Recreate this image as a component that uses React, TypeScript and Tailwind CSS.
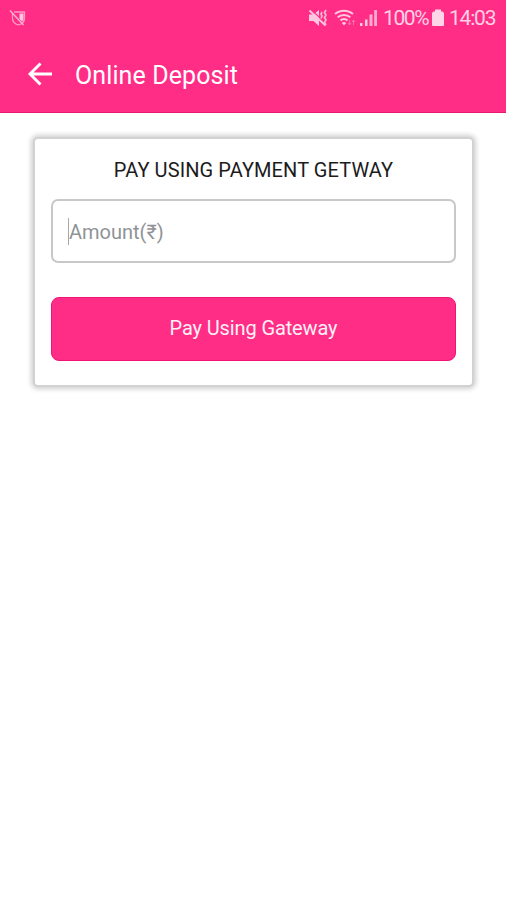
import React from 'react';

function ShieldOff() {
  return (
    <svg width="18" height="18" viewBox="0 0 18 18" fill="none">
      <path
        d="M5 3h10.500v6c0 3.500-2.500 6-6 7-3.500-1-6-3.500-6-7V4"
        stroke="#ff9cc6"
        strokeWidth="1.300"
      />
      <path d="M10.500 4.500h4V9c0 1.500-.500 2.500-1.500 3.500l-2.500-2.500z" fill="#ffc8e0" />
      <path d="M1 1.500l13.500 14.500" stroke="#ffb0d2" strokeWidth="1.400" />
    </svg>
  );
}

function Muted() {
  return (
    <svg width="20" height="18" viewBox="0 0 20 18" fill="none">
      <path d="M1 5.500h4.500l5.500-4.500v16l-5.500-5H1z" fill="#ffc8e0" />
      <path d="M3.500 1l15 14" stroke="#ff2d86" strokeWidth="1.200" />
      <path d="M1.500 1.500l16 15" stroke="#ffc8e0" strokeWidth="1.800" />
      <path
        d="M14 3l-1 2 1 2-1 2.500M18 1l-1.500 2.500L18 6l-1.500 2.500L18 11l-1.500 2.500L18 16"
        stroke="#ffb4d4"
        strokeWidth="1.700"
      />
    </svg>
  );
}

function Wifi() {
  return (
    <svg width="23" height="18" viewBox="0 0 23 18" fill="none">
      <path
        d="M1 5c5-4.500 13-4.500 18 0M3.700 8.300c3.500-3.200 9.100-3.200 12.600 0M6.500 11.500c2-1.900 5-1.900 7 0"
        stroke="#ffc8e0"
        strokeWidth="2"
      />
      <path d="M7.800 14c1.300-1.200 3.100-1.200 4.400 0L10 16.500z" fill="#ffc8e0" />
      <path d="M15.500 11v5M14 14l1.500 2 1.500-2M19.500 16v-5M18 13l1.500-2 1.500 2" stroke="#ff6fac" />
    </svg>
  );
}

function Signal() {
  return (
    <svg width="18" height="18" viewBox="0 0 18 18">
      <path d="M0 14h2.500v3H0zM5 10.500h2.500V17H5z" fill="#ffc8e0" />
      <path d="M9.500 5.500h3V17h-3zM14.200 1H17v16h-2.800z" fill="#ffabcf" />
    </svg>
  );
}

function Battery() {
  return (
    <svg width="12" height="18" viewBox="0 0 12 18">
      <path d="M3 .500h6v2h1.500l1.500 1.500v12.500l-1 .500H1l-1-.500V4l1.500-1.500H3z" fill="#ffd6e7" />
    </svg>
  );
}

export default function App() {
  return (
    <div className="h-[900px] w-[506px] bg-white font-[Roboto,'Noto_Sans',sans-serif]">
      <header className="h-[113px] border-b border-[#e91873] bg-[#ff2d86]">
        <div className="flex h-9 items-center justify-between pl-[9px] pr-[11px] text-[#ffd0e4]">
          <ShieldOff />
          <div className="flex items-center">
            <Muted />
            <div className="ml-[6px]">
              <Wifi />
            </div>
            <div className="ml-[3px]">
              <Signal />
            </div>
            <span className="ml-[5px] w-[45px] whitespace-nowrap text-[21px] leading-9 tracking-[-1.4px]">
              100%
            </span>
            <div className="ml-[4px]">
              <Battery />
            </div>
            <span className="ml-[5px] w-[46px] whitespace-nowrap text-[21px] leading-9 tracking-[-1.2px]">
              14:03
            </span>
          </div>
        </div>
        <div className="flex h-[76px] items-center pl-[28px] text-white">
          <svg width="24" height="24" viewBox="0 0 24 24" fill="none">
            <path d="M12.500 1.500L2 12l10.500 10.500M2 12h22" stroke="white" strokeWidth="2.900" />
          </svg>
          <h1 className="ml-[23px] pt-[3px] text-[25px] font-normal tracking-[0.1px]">
            Online Deposit
          </h1>
        </div>
      </header>

      <main className="pl-[35px] pr-[34px] pt-[26px]">
        <section className="h-[246px] rounded-[3px] bg-white px-4 pt-[16px] shadow-[0_0_0_2px_#d2d2d2,0_0_5px_4px_#d0d0d0]">
          <h2 className="text-center text-[20px] leading-[30px] tracking-[0.1px] text-[#1c1c1c]">
            PAY USING PAYMENT GETWAY
          </h2>
          <div className="mt-[14px] flex h-[64px] items-center rounded-[7px] border-2 border-[#c8c8c8] px-[15px]">
            <span className="h-[27px] w-px bg-[#a8a8a8]" />
            <span className="pt-[2px] text-[20px] text-[#909396]">Amount(₹)</span>
          </div>
          <button className="mt-[34px] h-[64px] w-full rounded-[8px] border border-[#f01478] bg-[#ff2d86] pb-[3px] text-[20px] tracking-[-0.12px] text-[#fff0f6]">
            Pay Using Gateway
          </button>
        </section>
      </main>
    </div>
  );
}
